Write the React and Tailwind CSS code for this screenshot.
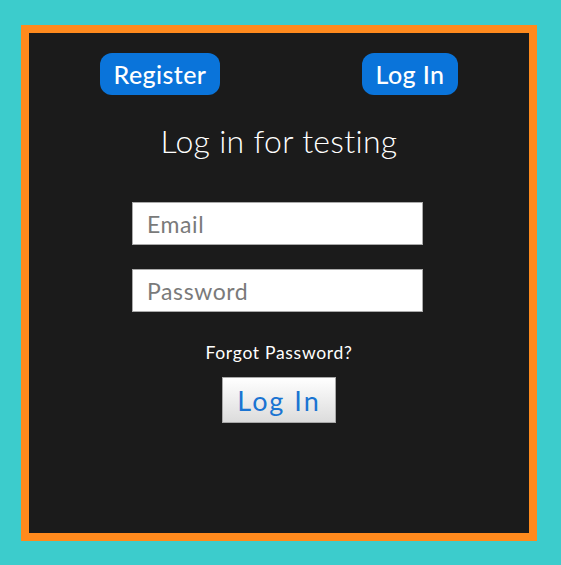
import React from "react";

const App = () => {
  return (
    <div className="w-full h-[565px] bg-[#3ccccc] pl-[21px] pt-[25px] font-['Lato','Liberation_Sans',sans-serif]">
      <div className="w-[516px] h-[516px] border-8 border-[#ff8a1d] bg-[#1b1b1b] flex flex-col items-center">
        {/* top nav */}
        <div className="w-full flex justify-between px-[71px] pt-[20px]">
          <button className="w-[120px] h-[42px] rounded-[12px] bg-[#0a74da] text-white text-[25px] font-medium tracking-[0.4px] leading-none">
            Register
          </button>
          <button className="w-[96px] h-[42px] rounded-[12px] bg-[#0a74da] text-white text-[25px] font-medium tracking-[0.4px] leading-none">
            Log In
          </button>
        </div>

        <h1 className="mt-[28px] text-white text-[32px] font-light tracking-[0.3px] leading-[36px]">Log in for testing</h1>

        <form className="mt-[43px] -ml-[3px] flex flex-col items-center">
          <input
            type="email"
            placeholder="Email"
            className="w-[291px] h-[43px] bg-white border border-[#aaaaaa] px-[14px] text-[23px] tracking-[0.6px] placeholder-[#7a7a7a] outline-none"
          />
          <input
            type="password"
            placeholder="Password"
            className="mt-[24px] w-[291px] h-[43px] bg-white border border-[#aaaaaa] px-[14px] text-[23px] tracking-[0.6px] placeholder-[#7a7a7a] outline-none"
          />
          <p className="mt-[31px] ml-[3px] text-white text-[17.5px] tracking-[0.7px] leading-[20px]">Forgot Password?</p>
          <button
            type="button"
            className="mt-[14px] ml-[3px] w-[114px] h-[46px] border border-[#a8a8a8] bg-gradient-to-b from-white to-[#dcdcdc] text-[#1a74d2] text-[27px] tracking-[2px] leading-none"
          >
            Log In
          </button>
        </form>
      </div>
    </div>
  );
};

export default App;
